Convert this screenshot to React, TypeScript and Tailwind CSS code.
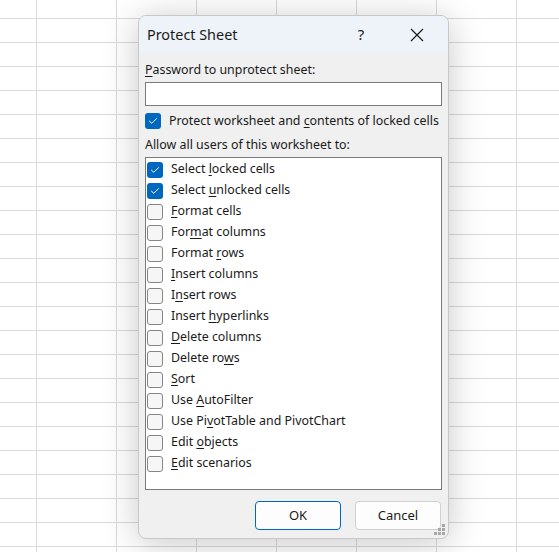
import React from "react";

type Option = {
  before: string;
  key: string;
  after: string;
  checked: boolean;
};

const OPTIONS: Option[] = [
  { before: "Select ", key: "l", after: "ocked cells", checked: true },
  { before: "Select ", key: "u", after: "nlocked cells", checked: true },
  { before: "", key: "F", after: "ormat cells", checked: false },
  { before: "For", key: "m", after: "at columns", checked: false },
  { before: "Format ", key: "r", after: "ows", checked: false },
  { before: "", key: "I", after: "nsert columns", checked: false },
  { before: "I", key: "n", after: "sert rows", checked: false },
  { before: "Insert ", key: "h", after: "yperlinks", checked: false },
  { before: "", key: "D", after: "elete columns", checked: false },
  { before: "Delete ro", key: "w", after: "s", checked: false },
  { before: "", key: "S", after: "ort", checked: false },
  { before: "Use ", key: "A", after: "utoFilter", checked: false },
  { before: "Use Pi", key: "v", after: "otTable and PivotChart", checked: false },
  { before: "Edit ", key: "o", after: "bjects", checked: false },
  { before: "", key: "E", after: "dit scenarios", checked: false },
];

function Checkbox({ checked }: { checked: boolean }) {
  if (checked) {
    return (
      <span className="flex h-4 w-4 shrink-0 items-center justify-center rounded-[3px] bg-[#0067c0]">
        <svg width="10" height="8" viewBox="0 0 10 8" fill="none">
          <path d="M1.5 4.2 L3.8 6.3 L8.5 1.6" stroke="white" strokeWidth="1" strokeLinecap="round" strokeLinejoin="round" />
        </svg>
      </span>
    );
  }
  return <span className="h-4 w-4 shrink-0 rounded-[3px] border border-[#858585] bg-[#f6f6f6]" />;
}

function Label({ before, k, after }: { before: string; k: string; after: string }) {
  return (
    <span>
      {before}
      <span className="underline underline-offset-2 decoration-1">{k}</span>
      {after}
    </span>
  );
}

export default function App() {
  return (
    <div
      className="h-[552px] w-[559px] overflow-hidden bg-white bg-[linear-gradient(to_right,#dadada_1px,transparent_1px),linear-gradient(to_bottom,#dadada_1px,transparent_1px)] bg-[size:80px_24px] bg-[position:36px_18px] pl-[138px] pt-[15px] text-[12.4px] text-[#1a1a1a]"
      style={{ fontFamily: '"Noto Sans", "Open Sans", sans-serif' }}
    >
      {/* Dialog */}
      <div className="relative flex h-[524px] w-[311px] flex-col overflow-hidden rounded-lg border border-[#c8c8c8] bg-[#f0f0f0] shadow-[0_4px_36px_rgba(0,0,0,0.22)]">
        {/* Title bar */}
        <div className="flex h-[37px] shrink-0 items-center bg-[#eef3f9] pl-[8px] pr-[8px]">
          <span className="flex-1 text-[14.4px]">Protect Sheet</span>
          <span className="mr-[10px] w-[46px] text-center text-[15px]">?</span>
          <span className="flex w-[46px] items-center justify-center">
            <svg width="14" height="14" viewBox="0 0 14 14">
              <path d="M1 1 L13 13 M13 1 L1 13" stroke="#1a1a1a" strokeWidth="1.2" />
            </svg>
          </span>
        </div>

        {/* Body */}
        <div className="flex flex-1 flex-col px-[6px] pt-[8px]">
          <div className="leading-[18px]">
            <Label before="" k="P" after="assword to unprotect sheet:" />
          </div>
          <div className="mt-[3px] h-[24px] w-[297px] border border-[#7a7a7a] bg-white" />

          <div className="mt-[6px] flex h-[18px] items-center gap-[8px]">
            <Checkbox checked />
            <Label before="Protect worksheet and " k="c" after="ontents of locked cells" />
          </div>

          <div className="mt-[6px] leading-[18px]">Allow all users of this worksheet to:</div>

          <div className="mt-[3px] flex h-[333px] w-[297px] flex-col border border-[#7a7a7a] bg-white pl-[1px] pt-[1px]">
            {OPTIONS.map((o) => (
              <div key={o.before + o.key + o.after} className="flex h-[21px] items-center gap-[8px]">
                <Checkbox checked={o.checked} />
                <Label before={o.before} k={o.key} after={o.after} />
              </div>
            ))}
          </div>

          <div className="mt-[11px] flex justify-end gap-[14px] pr-[1px]">
            <button className="h-[29px] w-[86px] rounded-[4px] border border-[#0067c0] bg-[#fdfdfd] text-[13px]">
              OK
            </button>
            <button className="h-[29px] w-[86px] rounded-[4px] border border-[#d0d0d0] bg-[#fdfdfd] text-[13px]">
              Cancel
            </button>
          </div>
        </div>

        {/* Resize grip */}
        <svg className="absolute bottom-[3px] right-[3px]" width="11" height="11" viewBox="0 0 11 11" fill="#a8a8a8">
          <rect x="8" y="0" width="3" height="3" />
          <rect x="4" y="4" width="3" height="3" />
          <rect x="8" y="4" width="3" height="3" />
          <rect x="0" y="8" width="3" height="3" />
          <rect x="4" y="8" width="3" height="3" />
          <rect x="8" y="8" width="3" height="3" />
        </svg>
      </div>
    </div>
  );
}
